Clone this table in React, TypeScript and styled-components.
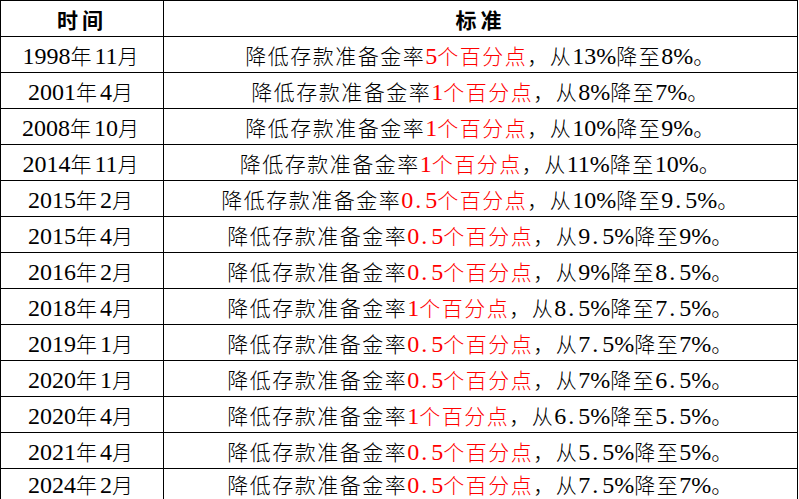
import React from 'react';
import styled, { createGlobalStyle } from 'styled-components';

const GlobalStyle = createGlobalStyle`
  html, body {
    margin: 0;
    padding: 0;
    background: #ffffff;
    overflow: hidden;
  }
`;

const Page = styled.div`
  width: 799px;
  height: 499px;
  overflow: hidden;
`;

const Table = styled.table`
  width: 798px;
  border-collapse: collapse;
  table-layout: fixed;
  font-family: 'Liberation Serif', 'Noto Sans CJK SC', serif;
  font-size: 21px;
  font-weight: 300;
  color: #000;
`;

const Row = styled.tr<{ short?: boolean }>`
  height: ${props => (props.short ? '30px' : '36px')};
`;

const HeadCell = styled.th<{ w?: string }>`
  width: ${props => props.w || 'auto'};
  border: 1px solid #000;
  padding: 0;
  font-weight: bold;
  font-size: 21px;
  letter-spacing: 4px;
  text-align: center;
  vertical-align: middle;
`;

const Cell = styled.td<{ spacing?: string }>`
  border: 1px solid #000;
  padding: 0;
  text-align: center;
  vertical-align: middle;
  white-space: nowrap;
  letter-spacing: ${props => props.spacing || '1.5px'};
`;

const Latin = styled.span`
  font-size: 24px;
  font-weight: 400;
  letter-spacing: 0;
`;

const Red = styled.span`
  color: #ff0000;
`;

const Dot = styled.span`
  display: inline-block;
  width: 0.5em;
  text-align: left;
  padding-left: 2px;
  box-sizing: border-box;
`;

const rows: [string, string, string, string, string][] = [
  ['1998', '11', '5', '13', '8'],
  ['2001', '4', '1', '8', '7'],
  ['2008', '10', '1', '10', '9'],
  ['2014', '11', '1', '11', '10'],
  ['2015', '2', '0.5', '10', '9.5'],
  ['2015', '4', '0.5', '9.5', '9'],
  ['2016', '2', '0.5', '9', '8.5'],
  ['2018', '4', '1', '8.5', '7.5'],
  ['2019', '1', '0.5', '7.5', '7'],
  ['2020', '1', '0.5', '7', '6.5'],
  ['2020', '4', '1', '6.5', '5.5'],
  ['2021', '4', '0.5', '5.5', '5'],
  ['2024', '2', '0.5', '7.5', '7'],
];

const Num: React.FC<{ value: string; pct?: boolean }> = ({ value, pct }) => {
  const [whole, frac] = value.split('.');
  return (
    <Latin>
      {whole}
      {frac !== undefined && (
        <>
          <Dot>.</Dot>
          {frac}
        </>
      )}
      {pct && '%'}
    </Latin>
  );
};

const App: React.FC = () => {
  return (
    <Page>
      <GlobalStyle />
      <Table>
        <thead>
          <Row>
            <HeadCell w="162px">时间</HeadCell>
            <HeadCell>标准</HeadCell>
          </Row>
        </thead>
        <tbody>
          {rows.map(([year, month, cut, from, to], i) => (
            <Row key={year + month} short={i === rows.length - 1}>
              <Cell spacing="3px">
                <Num value={year} />年<Num value={month} />月
              </Cell>
              <Cell>
                降低存款准备金率
                <Red>
                  <Num value={cut} />个百分点
                </Red>
                ，从<Num value={from} pct />降至<Num value={to} pct />。
              </Cell>
            </Row>
          ))}
        </tbody>
      </Table>
    </Page>
  );
};

export default App;
